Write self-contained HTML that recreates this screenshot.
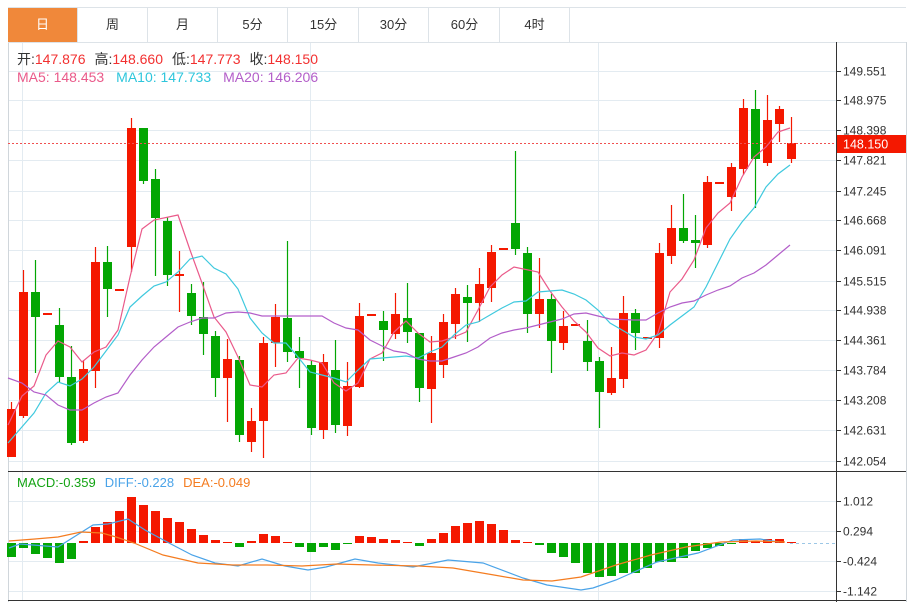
<!DOCTYPE html>
<html><head><meta charset="utf-8"><style>
html,body{margin:0;padding:0;background:#fff;width:916px;height:602px;overflow:hidden;font-family:"Liberation Sans","Noto Sans CJK SC",sans-serif}
.tabs{position:absolute;left:8px;top:7px;height:35px;width:898px;border-top:1px solid #dde3e8;box-sizing:border-box}
.tab{position:absolute;top:0;height:34px;width:70px;border-right:1px solid #dde3e8;box-sizing:border-box;text-align:center;line-height:34px;font-size:13px;color:#333}
.tab.on{background:#f0883a;color:#fff}
svg{position:absolute;left:0;top:0}
</style></head><body>
<div class="tabs">
<div class="tab on" style="left:0">日</div>
<div class="tab" style="left:70px">周</div>
<div class="tab" style="left:140px">月</div>
<div class="tab" style="left:210px">5分</div>
<div class="tab" style="left:281px">15分</div>
<div class="tab" style="left:351px">30分</div>
<div class="tab" style="left:422px">60分</div>
<div class="tab" style="left:492px">4时</div>
</div>
<svg id="s" width="916" height="602" xmlns="http://www.w3.org/2000/svg" font-family="Liberation Sans, Noto Sans CJK SC, sans-serif">
<g id="grid" stroke="#e3ebf1" stroke-width="1"></g>
<line x1="8.5" y1="42" x2="8.5" y2="602" stroke="#d0d6db"/>
<line x1="906.5" y1="42" x2="906.5" y2="602" stroke="#d0d6db"/>
<line x1="8" y1="42.5" x2="906" y2="42.5" stroke="#dde3e8"/>
<g id="c"></g>
<line x1="8" y1="143.5" x2="836" y2="143.5" stroke="#f05050" stroke-dasharray="2,2"/>
<line x1="790" y1="543.5" x2="836" y2="543.5" stroke="#9cc7e6" stroke-dasharray="3,3"/>
<line x1="836.5" y1="42" x2="836.5" y2="602" stroke="#333"/>
<line x1="8" y1="471.5" x2="906" y2="471.5" stroke="#333"/>
<line x1="8" y1="600.5" x2="906" y2="600.5" stroke="#333"/>
<g id="ax" font-size="12" fill="#333"></g>
<rect x="837" y="135" width="69" height="18" fill="#f41800"/>
<text x="843" y="148.5" font-size="12.5" fill="#fff">148.150</text>
<text x="17" y="64" font-size="14"><tspan fill="#333">开:</tspan><tspan fill="#f23030">147.876</tspan><tspan fill="#333" dx="9">高:</tspan><tspan fill="#f23030">148.660</tspan><tspan fill="#333" dx="9">低:</tspan><tspan fill="#f23030">147.773</tspan><tspan fill="#333" dx="9">收:</tspan><tspan fill="#f23030">148.150</tspan></text>
<text x="17" y="82" font-size="14"><tspan fill="#ea5a8a">MA5: 148.453</tspan><tspan fill="#2ec6dc" dx="12">MA10: 147.733</tspan><tspan fill="#b35ec9" dx="12">MA20: 146.206</tspan></text>
<text x="17" y="487" font-size="13"><tspan fill="#13a313">MACD:-0.359</tspan><tspan fill="#4aa3e8" dx="9">DIFF:-0.228</tspan><tspan fill="#f47c20" dx="9">DEA:-0.049</tspan></text>
</svg>
<script>
var NS="http://www.w3.org/2000/svg",s=document.getElementById('s');
function el(p,t,a){var e=document.createElementNS(NS,t);for(var k in a)e.setAttribute(k,a[k]);p.appendChild(e);return e;}
var g=document.getElementById('grid'),ax=document.getElementById('ax'),c=document.getElementById('c');
var ticks=[[71,"149.551"],[100,"148.975"],[130,"148.398"],[160,"147.821"],[191,"147.245"],[220,"146.668"],[250,"146.091"],[281,"145.515"],[310,"144.938"],[340,"144.361"],[370,"143.784"],[400,"143.208"],[430,"142.631"],[461,"142.054"],[501,"1.012"],[531,"0.294"],[561,"-0.424"],[591,"-1.142"]];
ticks.forEach(function(t){el(g,'line',{x1:8,x2:836,y1:t[0]+.5,y2:t[0]+.5});el(ax,'line',{x1:836,x2:841,y1:t[0]+.5,y2:t[0]+.5,stroke:'#333'});var e=el(ax,'text',{x:843,y:t[0]+4.5});e.textContent=t[1];});
[22,310,598].forEach(function(x){el(g,'line',{x1:x+.5,x2:x+.5,y1:42,y2:600});});
var R='#f41800',G='#03a603';
var d=[[R,409,457,402,457],[R,292,416,270,418],[G,292,317,260,373],[R,313,315,313,315],[G,325,377,308,383],[G,377,443,346,445],[R,369,441,360,443],[R,262,371,247,388],[G,262,289,246,317],[R,289,291,289,291],[R,128,247,118,272],[G,128,181,128,184],[G,179,218,169,276],[G,221,275,217,286],[R,274,276,251,312],[G,293,316,284,325],[G,317,334,282,355],[G,336,378,331,397],[R,359,378,339,422],[G,360,435,356,442],[R,421,442,408,452],[R,343,421,337,458],[R,317,343,304,367],[G,318,352,241,362],[G,351,358,337,388],[G,365,428,360,435],[R,362,430,354,439],[G,370,425,340,433],[R,386,426,362,436],[R,316,387,303,388],[R,314,316,314,316],[G,321,330,311,361],[R,314,334,293,339],[G,318,332,283,343],[G,333,388,333,402],[R,353,389,336,423],[R,322,365,314,378],[R,294,324,288,339],[G,297,303,285,342],[R,284,303,268,322],[R,252,288,245,302],[R,248,250,248,250],[G,223,249,151,255],[G,253,314,247,333],[R,299,314,258,328],[G,299,341,294,373],[R,326,343,311,350],[R,324,326,324,326],[G,341,362,320,371],[G,361,392,357,428],[R,378,393,347,395],[R,313,379,296,388],[G,313,333,309,350],[R,337,339,337,339],[R,253,338,243,348],[R,228,256,205,264],[G,228,241,194,243],[G,240,243,215,268],[R,182,245,176,248],[R,182,184,182,184],[R,167,197,163,211],[R,108,169,99,175],[G,109,159,90,208],[R,120,163,95,166],[R,109,124,106,142],[R,143,159,117,163]];
d.forEach(function(k,i){var x=11+12*i;el(c,'line',{x1:x+.5,x2:x+.5,y1:k[3],y2:k[4],stroke:k[0],'stroke-width':1.2});el(c,'rect',{x:x-4,y:k[1],width:9,height:Math.max(1.5,k[2]-k[1]),fill:k[0]});});
var m=[557,548,554,558,563,559,541,527,522,511,497,505,511,518,522,529,535,540,542,547,541,534,536,542,547,552,547,550,543,536,537,539,540,542,546,539,533,526,523,521,524,530,540,542,545,553,557,563,573,577,576,573,573,568,562,562,558,551,548,546,544,539,541,539,539,542];
m.forEach(function(v,i){var x=11+12*i;var z=543;var col=v<z?R:G;var y=Math.min(v,z),h=Math.max(1,Math.abs(v-z));el(c,'rect',{x:x-4,y:y,width:9,height:h,fill:col});});
function pl(p,col){el(c,'polyline',{points:p,fill:'none',stroke:col,'stroke-width':1.2});}
pl("8,425 22,396 34,386 46,355 58,341 70,347 82,362 94,352 106,347 118,330 130,277 142,229 154,220 178,215 190,250 202,283 214,317 226,332 238,357 250,385 262,387 274,375 286,373 298,358 310,360 322,363 334,383 346,391 358,383 370,359 382,353 394,332 406,321 418,333 430,342 442,341 454,337 466,332 478,310 490,287 502,275 514,267 538,272 550,291 562,307 574,321 586,332 598,348 610,356 622,353 634,355 646,350 658,333 670,292 682,279 694,260 706,228 718,213 730,203 742,177 754,157 766,147 778,132 790,128","#ea5a8a");
pl("8,443 34,413 46,393 58,382 70,386 82,379 94,367 106,351 118,335 130,307 142,296 154,286 166,282 178,272 190,259 202,256 214,268 226,274 238,289 250,318 262,333 274,343 286,343 298,357 310,372 322,375 334,378 346,382 358,370 370,359 382,358 406,356 418,358 430,352 442,347 454,335 466,325 478,322 490,315 502,308 514,302 526,301 538,292 550,291 562,290 574,294 586,300 598,310 610,323 622,330 634,337 646,339 658,335 670,325 682,316 694,307 706,287 718,263 730,239 742,222 754,208 766,187 778,174 790,165","#3fc9de");
pl("8,378 22,383 34,392 46,395 58,405 70,410 82,410 94,403 106,397 118,393 130,375 142,360 154,347 166,337 178,327 190,322 202,318 214,318 226,313 238,312 250,313 262,316 274,316 322,316 334,323 346,328 358,330 370,340 382,346 394,351 406,353 418,359 430,361 442,361 454,357 466,353 478,347 490,338 502,333 514,330 526,328 538,325 550,322 562,319 574,314 586,313 598,316 610,319 634,320 646,320 658,313 670,307 682,303 694,301 706,295 718,290 730,286 742,278 754,273 766,265 778,255 790,245","#b35ec9");
pl("9,548 20,544 58,547 93,525 108,524 128,519 145,530 169,543 192,555 215,563 238,566 262,559 285,566 308,570 326,567 355,559 378,563 413,567 448,560 483,563 523,578 547,585 581,590 593,588 616,580 634,572 657,562 698,553 733,540 760,539 779,542","#4aa3e8");
pl("9,541 35,539 58,537 81,532 102,533 116,537 134,543 163,555 198,563 233,565 267,565 302,566 337,564 372,565 419,566 453,568 494,575 523,580 552,581 581,577 616,565 651,555 686,547 721,542 756,541 785,542","#f47c20");
</script>
</body></html>
